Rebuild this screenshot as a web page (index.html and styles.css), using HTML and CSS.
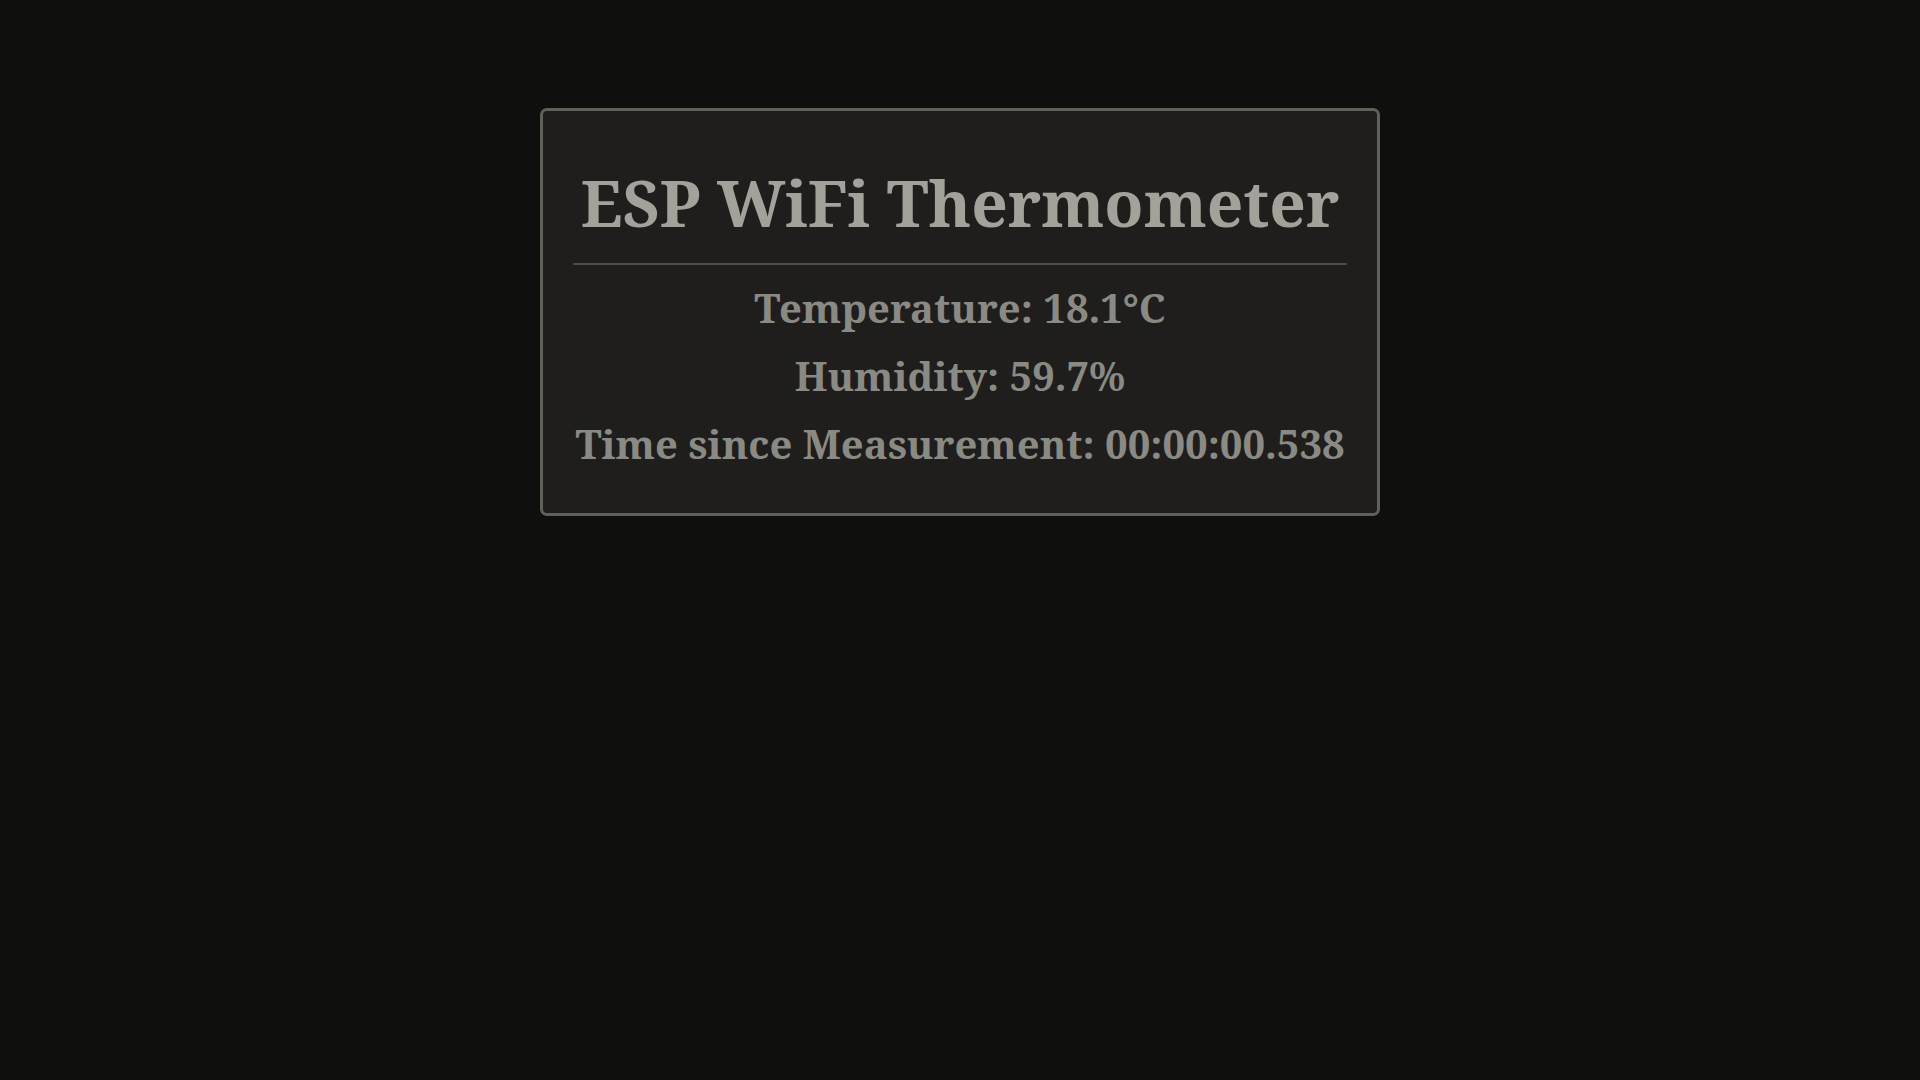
FILE: index.html
```html
<!DOCTYPE html>
<html lang="en">
<head>
<meta charset="utf-8">
<title>ESP WiFi Thermometer</title>
<link rel="stylesheet" href="styles.css">
</head>
<body>
<main class="page">
  <section class="card">
    <h1 class="title">ESP WiFi Thermometer</h1>
    <hr class="rule">
    <p class="reading">Temperature: 18.1°C</p>
    <p class="reading">Humidity: 59.7%</p>
    <p class="reading">Time since Measurement: 00:00:00.538</p>
  </section>
</main>
</body>
</html>
```
FILE: styles.css
```css
html, body {
  margin: 0;
  padding: 0;
  background: #0f0f0d;
  height: 100%;
}
body {
  font-family: "Noto Serif", "DejaVu Serif", serif;
  font-weight: 700;
}
.page {
  display: flex;
  justify-content: center;
  padding-top: 108px;
}
.card {
  box-sizing: border-box;
  width: 840px;
  background: #1f1e1c;
  border: 3px solid #626157;
  border-radius: 7px;
  padding: 52px 30px 35px;
  text-align: center;
}
.title {
  margin: 0;
  font-size: 64px;
  line-height: 80px;
  color: #a2a29a;
  font-weight: 700;
}
.rule {
  margin: 20px 0 9px;
  border: 0;
  height: 2px;
  background: #4c4b46;
}
.reading {
  margin: 0;
  font-size: 40px;
  line-height: 68px;
  color: #8a8a84;
}
```
